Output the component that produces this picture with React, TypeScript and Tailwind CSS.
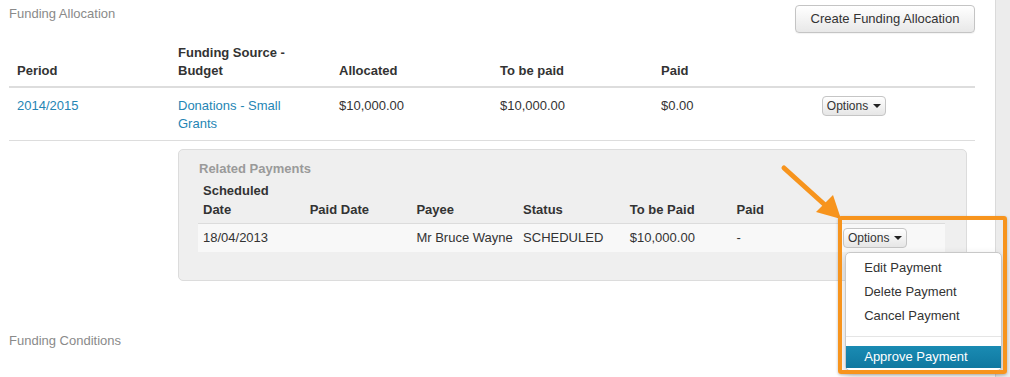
import React from 'react';

const font = { fontFamily: '"Liberation Sans", Arial, Helvetica, sans-serif' };

// tiny bootstrap-ish caret
const Caret = () => (
    <span className="ml-[5px] inline-block h-0 w-0 border-x-[4px] border-t-[4px] border-b-0 border-x-transparent border-t-[#222] align-middle" />
);

const OptionsButton = () => (
    <button className="flex h-[20px] w-[64px] items-center justify-center rounded-[4px] border border-[#c5c5c5] bg-gradient-to-b from-white to-[#e6e6e6] text-[12px] leading-none text-[#333] shadow-[inset_0_1px_0_rgba(255,255,255,0.3)]">
        Options
        <Caret />
    </button>
);

const PaymentMenu = () => (
    <div className="absolute left-[2px] top-[24px] z-10 w-[157px] rounded-[5px] border border-[#c8c8c8] bg-white pt-[3px] pb-[2px] shadow-[0_4px_10px_rgba(0,0,0,0.2)]">
        {['Edit Payment', 'Delete Payment', 'Cancel Payment'].map((label) => (
            <div key={label} className="h-[24px] pl-[18px] text-[13px] leading-[24px] text-[#333]">
                {label}
            </div>
        ))}
        <div className="mt-[8px] mb-[9px] h-px bg-[#e5e5e5]" />
        <div className="h-[22px] bg-gradient-to-b from-[#1a8bb3] to-[#0f78a0] pl-[18px] text-[13px] leading-[22px] text-white">
            Approve Payment
        </div>
    </div>
);

const RelatedPayments = () => (
    <div className="rounded-[5px] border border-[#dcdcdc] bg-[#efefef] pt-[10px] pr-[20px] pb-[28px] pl-[19px]">
        <div className="h-[18px] pl-[1px] text-[13px] font-bold leading-[18px] text-[#9a9a9a]">Related Payments</div>
        <table className="w-[747px] table-fixed border-collapse text-[13px] text-[#333]">
            <thead>
                <tr className="border-b border-[#dcdcdc]">
                    {['Scheduled Date', 'Paid Date', 'Payee', 'Status', 'To be Paid', 'Paid', ''].map((h, i) => (
                        <th key={i} className="px-[5px] pt-[3px] pb-[4px] text-left align-bottom font-bold leading-[19px]">
                            {h}
                        </th>
                    ))}
                </tr>
            </thead>
            <tbody>
                <tr className="h-[28px] bg-[#f8f8f8]">
                    <td className="px-[5px]">18/04/2013</td>
                    <td className="px-[5px]"></td>
                    <td className="whitespace-nowrap px-[5px]">Mr Bruce Wayne</td>
                    <td className="px-[5px]">SCHEDULED</td>
                    <td className="px-[5px]">$10,000.00</td>
                    <td className="px-[5px]">-</td>
                    <td className="px-[5px]">
                        <div className="relative">
                            <OptionsButton />
                            <PaymentMenu />
                        </div>
                    </td>
                </tr>
            </tbody>
        </table>
    </div>
);

export default function App() {
    return (
        <div className="relative flex h-[377px] w-[1010px] overflow-hidden bg-white" style={font}>
            <div className="w-[995px] pl-[9px] pr-[20px]">
                {/* Header */}
                <div className="flex h-[35px] items-start justify-between">
                    <div className="pt-[5px] text-[13px] leading-[18px] text-[#8a8a8a]">Funding Allocation</div>
                    <button className="mt-[5px] h-[28px] w-[180px] rounded-[4px] border border-[#c4c4c4] bg-gradient-to-b from-white to-[#e8e8e8] text-[13px] text-[#333] shadow-[0_1px_1px_rgba(0,0,0,0.05)]">
                        Create Funding Allocation
                    </button>
                </div>

                {/* Allocation table */}
                <table className="w-[966px] table-fixed border-collapse text-[13px] leading-[18px] text-[#333]">
                    <thead>
                        <tr className="border-b-2 border-[#dddddd]">
                            {['Period', 'Funding Source - Budget', 'Allocated', 'To be paid', 'Paid', ''].map((h, i) => (
                                <th key={i} className="w-[161px] px-[8px] pt-[9px] pb-[6px] text-left align-bottom font-bold">
                                    {h}
                                </th>
                            ))}
                        </tr>
                    </thead>
                    <tbody>
                        <tr className="border-b border-[#dddddd] align-top">
                            <td className="px-[8px] pt-[9px] pb-[7px] text-[#2585b4]">2014/2015</td>
                            <td className="px-[8px] pt-[9px] pb-[7px] text-[#2585b4]">Donations - Small Grants</td>
                            <td className="px-[8px] pt-[9px] pb-[7px]">$10,000.00</td>
                            <td className="px-[8px] pt-[9px] pb-[7px]">$10,000.00</td>
                            <td className="px-[8px] pt-[9px] pb-[7px]">$0.00</td>
                            <td className="px-[8px] pt-[8px] pb-[7px]">
                                <OptionsButton />
                            </td>
                        </tr>
                        <tr>
                            <td />
                            <td colSpan={5} className="px-[8px] pt-[8px]">
                                <RelatedPayments />
                            </td>
                        </tr>
                    </tbody>
                </table>

                <div className="mt-[51px] text-[13px] leading-[18px] text-[#8a8a8a]">Funding Conditions</div>
            </div>

            {/* right gutter */}
            <div className="flex-1 border-l border-[#dadada] bg-[#ececec]" />

            {/* annotation: arrow + highlight box */}
            <svg className="pointer-events-none absolute left-[775px] top-[160px] z-20" width="75" height="70" viewBox="0 0 75 70">
                <line x1="9" y1="8" x2="50" y2="45" stroke="#f7941d" strokeWidth="5" strokeLinecap="round" />
                <polygon points="66,59 41,52 58,35" fill="#f7941d" />
            </svg>
            <div className="pointer-events-none absolute left-[838px] top-[216px] z-20 h-[158px] w-[169px] rounded-[3px] border-[4px] border-[#f7941d] shadow-[0_1px_3px_rgba(0,0,0,0.25)]" />
        </div>
    );
}
